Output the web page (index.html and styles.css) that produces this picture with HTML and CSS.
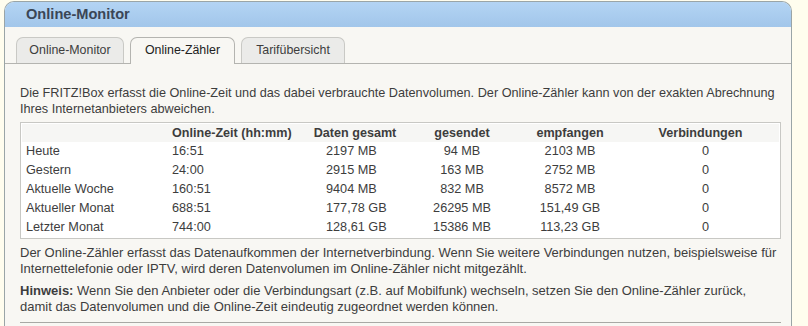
FILE: index.html
```html
<!DOCTYPE html>
<html lang="de">

<head>
    <meta charset="UTF-8">
    <title>Online-Monitor</title>
    <link rel="stylesheet" href="styles.css">
</head>

<body>
    <div class="box">
        <div class="boxHead">Online-Monitor</div>
        <div class="tabs">
            <div class="tab">Online-Monitor</div>
            <div class="tab active">Online-Zähler</div>
            <div class="tab">Tarifübersicht</div>
        </div>
        <div class="content">
            <p class="intro">Die FRITZ!Box erfasst die Online-Zeit und das dabei verbrauchte Datenvolumen. Der Online-Zähler kann von der exakten Abrechnung Ihres Internetanbieters abweichen.</p>
            <div class="tableBox">
                <table>
                    <tr class="head">
                        <th class="cName"></th>
                        <th class="cTime">Online-Zeit (hh:mm)</th>
                        <th class="cTotal">Daten gesamt</th>
                        <th class="cSent">gesendet</th>
                        <th class="cRecv">empfangen</th>
                        <th class="cConn">Verbindungen</th>
                    </tr>
                    <tr>
                        <td class="cName">Heute</td>
                        <td class="cTime">16:51</td>
                        <td class="cTotal">2197 MB</td>
                        <td class="cSent">94 MB</td>
                        <td class="cRecv">2103 MB</td>
                        <td class="cConn">0</td>
                    </tr>
                    <tr>
                        <td class="cName">Gestern</td>
                        <td class="cTime">24:00</td>
                        <td class="cTotal">2915 MB</td>
                        <td class="cSent">163 MB</td>
                        <td class="cRecv">2752 MB</td>
                        <td class="cConn">0</td>
                    </tr>
                    <tr>
                        <td class="cName">Aktuelle Woche</td>
                        <td class="cTime">160:51</td>
                        <td class="cTotal">9404 MB</td>
                        <td class="cSent">832 MB</td>
                        <td class="cRecv">8572 MB</td>
                        <td class="cConn">0</td>
                    </tr>
                    <tr>
                        <td class="cName">Aktueller Monat</td>
                        <td class="cTime">688:51</td>
                        <td class="cTotal">177,78 GB</td>
                        <td class="cSent">26295 MB</td>
                        <td class="cRecv">151,49 GB</td>
                        <td class="cConn">0</td>
                    </tr>
                    <tr>
                        <td class="cName">Letzter Monat</td>
                        <td class="cTime">744:00</td>
                        <td class="cTotal">128,61 GB</td>
                        <td class="cSent">15386 MB</td>
                        <td class="cRecv">113,23 GB</td>
                        <td class="cConn">0</td>
                    </tr>
                </table>
            </div>
            <p class="note">Der Online-Zähler erfasst das Datenaufkommen der Internetverbindung. Wenn Sie weitere Verbindungen nutzen, beispielsweise für Internettelefonie oder IPTV, wird deren Datenvolumen im Online-Zähler nicht mitgezählt.</p>
            <p class="note"><b>Hinweis:</b> Wenn Sie den Anbieter oder die Verbindungsart (z.B. auf Mobilfunk) wechseln, setzen Sie den Online-Zähler zurück, damit das Datenvolumen und die Online-Zeit eindeutig zugeordnet werden können.</p>
            <div class="rule"></div>
        </div>
    </div>
</body>

</html>
```

FILE: styles.css
```css
* {
    margin: 0;
    padding: 0;
    box-sizing: border-box;
    font-family: 'Liberation Sans', Arial, sans-serif;
}

body {
    background: #fffdee;
    color: #3d3d3d;
    font-size: 12.8px;
}

.box {
    margin: 1px 0 0 4px;
    width: 788px;
    height: 340px;
    border: 1px solid #9aa5a7;
    border-bottom: none;
    border-radius: 10px 10px 0 0;
    background: #f8f7f3;
    overflow: hidden;
}

.boxHead {
    height: 25px;
    line-height: 25px;
    padding-left: 21px;
    font-size: 14.6px;
    font-weight: bold;
    color: #3a4656;
    background: linear-gradient(#b3d4f4, #a2c6ea);
}

.tabs {
    display: flex;
    gap: 6px;
    padding: 10px 0 0 11px;
    border-bottom: 1px solid #b4b4b0;
}

.tab {
    height: 26px;
    line-height: 25px;
    width: 108px;
    font-size: 12.4px;
    text-align: center;
    color: #3d3d3d;
    background: #ebebe9;
    border: 1px solid #c9c9c5;
    border-bottom: none;
    border-radius: 7px 7px 0 0;
}

.tab:nth-child(2) {
    width: 105px;
}

.tab:nth-child(3) {
    width: 104px;
}

.tab.active {
    background: #f8f7f3;
    border-color: #b4b4b0;
    margin-bottom: -1px;
    height: 27px;
    color: #222;
}

.content {
    padding: 21px 10px 0 15px;
}

.intro,
.note {
    line-height: 16px;
}

.intro {
    font-size: 12.7px;
}

.tableBox {
    margin: 5px 0 6px 0;
    background: #fff;
    border: 1px solid #c8c8c4;
    padding: 1px;
}

table {
    width: 100%;
    border-collapse: collapse;
}

th {
    font-size: 12.6px;
    font-weight: bold;
    height: 18px;
    line-height: 18px;
    background: #f6f6f4;
    color: #3d3d3d;
}

td {
    font-size: 12.7px;
    height: 19px;
    line-height: 19px;
}

.cName {
    width: 147px;
    text-align: left;
    padding-left: 4px;
}

.cTime {
    width: 135px;
    text-align: left;
    padding-left: 3px;
}

.cTotal {
    width: 102px;
    text-align: center;
}

td.cTotal {
    text-align: left;
    padding-left: 22px;
}

.cSent {
    width: 112px;
    text-align: center;
}

.cRecv {
    width: 104px;
    text-align: center;
}

.cConn {
    text-align: center;
}

td.cConn {
    padding-left: 10px;
}

.note {
    font-size: 13px;
    margin-bottom: 6px;
}

.rule {
    margin-top: 7px;
    border-top: 1px solid #a8a8a4;
}
```
